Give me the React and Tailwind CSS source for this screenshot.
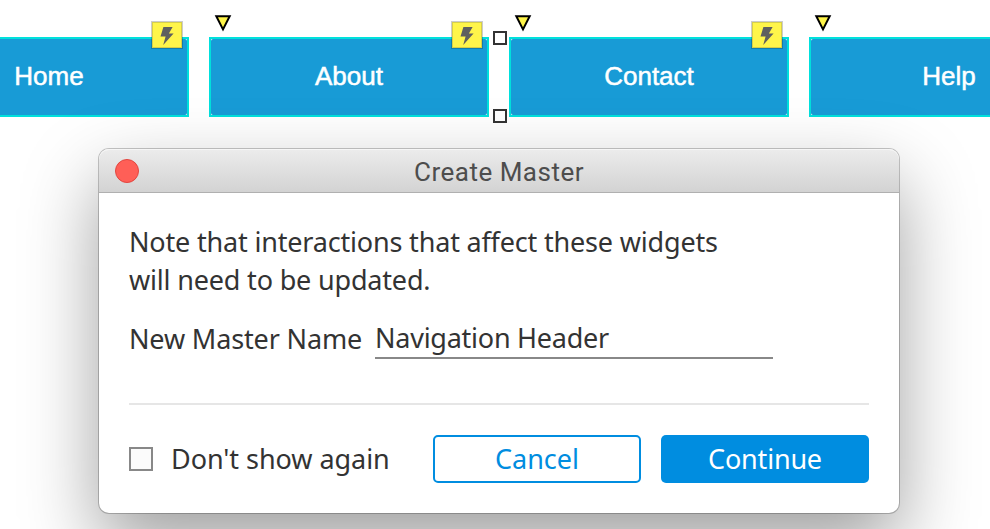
import { useState } from 'react';

const navItems = [
  { name: 'Home', badge: true },
  { name: 'About', badge: true },
  { name: 'Contact', badge: true },
  { name: 'Help', badge: false },
];

function Bolt() {
  return (
    <svg width="14" height="18" viewBox="0 0 14 18" className="mt-px">
      <path d="M3.4 0H12.6L8.9 6.6H13.6L3.2 18L5.6 9.4H0.5Z" fill="#5f5f5f" />
    </svg>
  );
}

function Marker() {
  return (
    <svg width="18" height="18" viewBox="0 0 18 18" className="absolute -top-[25px] left-[3px]">
      <path d="M2.3 2.2H15.7L9 15.4Z" fill="#fff54a" stroke="#000" strokeWidth="2" />
    </svg>
  );
}

function Handle({ className }) {
  return <span className={`absolute size-[14px] border-2 border-[#333] bg-white ${className}`} />;
}

function NavButton({ item }) {
  return (
    <div className="relative w-[280px] h-20 shrink-0 border-2 border-[#00e0dc] bg-white">
      <div className="size-full pb-0.5 rounded-[2px] bg-[#189bd6] flex items-center justify-center text-white text-[26px] leading-none font-['Liberation_Sans',Arial,sans-serif] [-webkit-text-stroke:0.5px_white]">
        {item.name}
      </div>
      <Marker />
      {item.badge && (
        <div className="absolute -top-[17px] right-[5px] w-[30px] h-[26px] border border-[#d6cf4a] bg-[#fff54a] flex items-center justify-center shadow-[0_0_0_1px_rgba(0,0,0,0.2)]">
          <Bolt />
        </div>
      )}
    </div>
  );
}

export default function App() {
  const [name, setName] = useState('Navigation Header');
  const [hide, setHide] = useState(false);

  return (
    <div className="w-[990px] h-[529px] overflow-hidden bg-white text-[#333] text-[27px] font-['Noto_Sans',sans-serif]">
      {/* Selected widgets on the canvas */}
      <nav className="relative flex gap-5 pt-[37px] -ml-[91px]">
        {navItems.map((item) => (
          <NavButton key={item.name} item={item} />
        ))}
        <Handle className="left-[584px] top-[31px]" />
        <Handle className="left-[584px] top-[109px]" />
      </nav>

      {/* Dialog */}
      <div className="relative mt-8 ml-[99px] w-[800px] h-[364px] rounded-[10px] bg-white shadow-[0_0_0_1px_rgba(0,0,0,0.22),0_32px_76px_rgba(0,0,0,0.38)]">
        <div className="relative h-11 rounded-t-[10px] border-b border-[#b0b0b0] bg-linear-to-b from-[#ececec] to-[#d3d3d3] flex items-center justify-center shadow-[inset_0_1px_0_#f6f6f6]">
          <button className="absolute left-4 top-[10px] size-6 rounded-full border border-[#e2463f] bg-[#ff5f57]" />
          <h1 className="text-[26px] leading-none pt-[3px] text-[#4d4d4d] font-['Roboto',sans-serif] tracking-[0.5px]">Create Master</h1>
        </div>

        <div className="px-[30px] pt-[30px]">
          <p className="leading-[38px] tracking-[-0.18px]">
            Note that interactions that affect these widgets
            <br />
            will need to be updated.
          </p>

          <div className="flex items-start mt-4">
            <label htmlFor="master" className="w-[246px] pt-[5px] leading-[38px] whitespace-nowrap tracking-[-0.15px]">New Master Name</label>
            <input
              id="master"
              value={name}
              onChange={(e) => setName(e.target.value)}
              className="w-[398px] h-11 pt-0.5 border-b-2 border-[#888] outline-none tracking-[-0.25px]"
            />
          </div>

          <div className="mt-11 h-0.5 bg-[#e6e6e6]" />

          <div className="flex items-center mt-[30px] h-12">
            <button
              onClick={() => setHide(!hide)}
              className="size-6 border-2 border-[#888] bg-[#fbfbfb] flex items-center justify-center text-sm"
            >
              {hide ? '✓' : ''}
            </button>
            <span className="ml-[18px] w-[262px] whitespace-nowrap tracking-[-0.05px]">Don't show again</span>
            <button className="w-[208px] h-12 pb-0.5 rounded-[5px] border-2 border-[#008de0] text-[#008de0] leading-none">Cancel</button>
            <button className="ml-5 w-[208px] h-12 pb-0.5 rounded-[5px] bg-[#008de0] text-white leading-none tracking-[-0.2px]">Continue</button>
          </div>
        </div>
      </div>
    </div>
  );
}
